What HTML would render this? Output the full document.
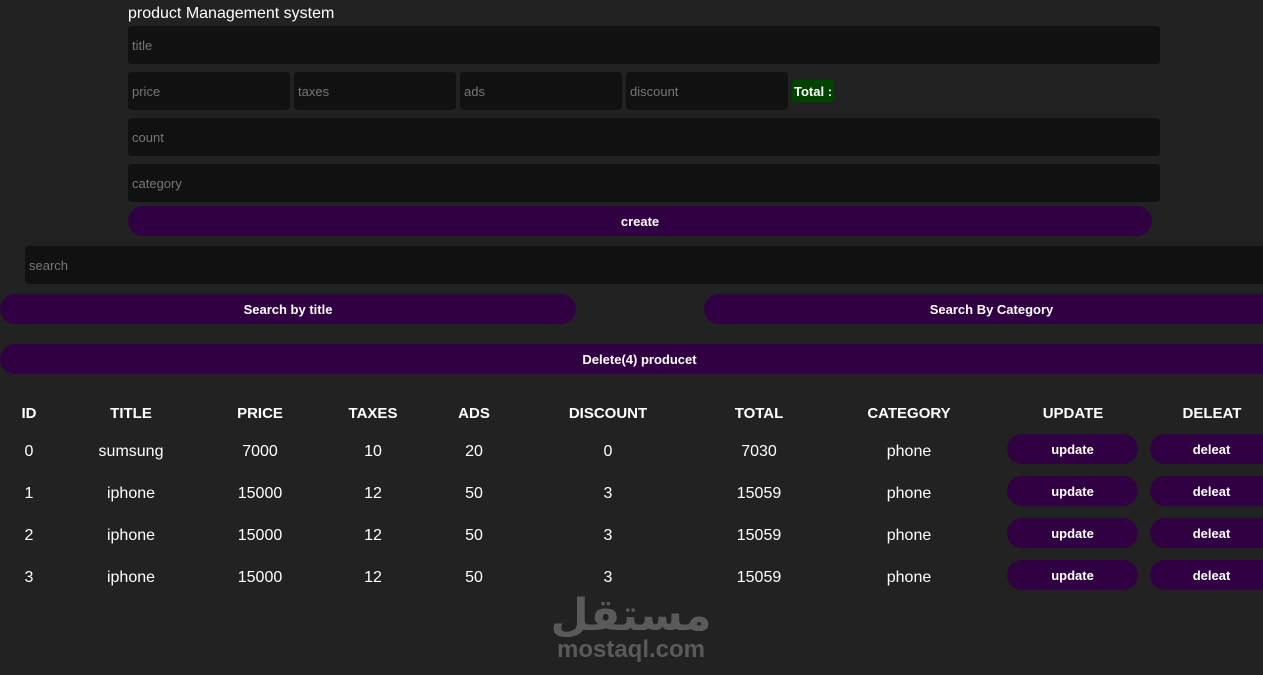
<!DOCTYPE html>
<html><head><meta charset="utf-8"><style>
body{margin:0;width:1263px;height:675px;background:#222;overflow:hidden;font-family:"Liberation Sans",sans-serif;color:#fff;position:relative}
.a{position:absolute}
.in{position:absolute;background:#111;border-radius:4px;height:38px;color:#777;font-size:13px;line-height:40px;padding-left:4px;box-sizing:border-box}
.btn{position:absolute;background:#310042;border-radius:15px;height:30px;line-height:32px;text-align:center;font-size:13px;font-weight:bold;color:#fff}
.c{position:absolute;transform:translateX(-50%);font-size:16px;white-space:nowrap;margin-top:1px}
.h{font-weight:bold;font-size:15px}
</style></head><body>
<div class="a" style="left:128px;top:5px;font-size:16px">product Management system</div>
<div class="in" style="left:128px;top:26px;width:1032px">title</div>
<div class="in" style="left:128px;top:72px;width:162px">price</div>
<div class="in" style="left:294px;top:72px;width:162px">taxes</div>
<div class="in" style="left:460px;top:72px;width:162px">ads</div>
<div class="in" style="left:626px;top:72px;width:162px">discount</div>
<div class="a" style="left:792px;top:80px;height:22px;line-height:23px;padding:0 2px;background:#004400;border-radius:3px;font-size:13px;font-weight:bold">Total :</div>
<div class="in" style="left:128px;top:118px;width:1032px">count</div>
<div class="in" style="left:128px;top:164px;width:1032px">category</div>
<div class="btn" style="left:128px;top:206px;width:1024px">create</div>
<div class="in" style="left:25px;top:246px;width:1250px">search</div>
<div class="btn" style="left:0;top:294px;width:576px">Search by title</div>
<div class="btn" style="left:704px;top:294px;width:575px">Search By Category</div>
<div class="btn" style="left:0;top:344px;width:1279px">Delete(4) producet</div>
<div class="c h" style="left:29px;top:404px">ID</div>
<div class="c h" style="left:131px;top:404px">TITLE</div>
<div class="c h" style="left:260px;top:404px">PRICE</div>
<div class="c h" style="left:373px;top:404px">TAXES</div>
<div class="c h" style="left:474px;top:404px">ADS</div>
<div class="c h" style="left:608px;top:404px">DISCOUNT</div>
<div class="c h" style="left:759px;top:404px">TOTAL</div>
<div class="c h" style="left:909px;top:404px">CATEGORY</div>
<div class="c h" style="left:1073px;top:404px">UPDATE</div>
<div class="c h" style="left:1212px;top:404px">DELEAT</div>

<div class="c" style="left:29px;top:442px">0</div><div class="c" style="left:131px;top:442px">sumsung</div><div class="c" style="left:260px;top:442px">7000</div><div class="c" style="left:373px;top:442px">10</div><div class="c" style="left:474px;top:442px">20</div><div class="c" style="left:608px;top:442px">0</div><div class="c" style="left:759px;top:442px">7030</div><div class="c" style="left:909px;top:442px">phone</div>
<div class="btn" style="left:1007px;top:434px;width:131px">update</div><div class="btn" style="left:1150px;top:434px;width:130px;text-indent:-7px">deleat</div>

<div class="c" style="left:29px;top:484px">1</div><div class="c" style="left:131px;top:484px">iphone</div><div class="c" style="left:260px;top:484px">15000</div><div class="c" style="left:373px;top:484px">12</div><div class="c" style="left:474px;top:484px">50</div><div class="c" style="left:608px;top:484px">3</div><div class="c" style="left:759px;top:484px">15059</div><div class="c" style="left:909px;top:484px">phone</div>
<div class="btn" style="left:1007px;top:476px;width:131px">update</div><div class="btn" style="left:1150px;top:476px;width:130px;text-indent:-7px">deleat</div>

<div class="c" style="left:29px;top:526px">2</div><div class="c" style="left:131px;top:526px">iphone</div><div class="c" style="left:260px;top:526px">15000</div><div class="c" style="left:373px;top:526px">12</div><div class="c" style="left:474px;top:526px">50</div><div class="c" style="left:608px;top:526px">3</div><div class="c" style="left:759px;top:526px">15059</div><div class="c" style="left:909px;top:526px">phone</div>
<div class="btn" style="left:1007px;top:518px;width:131px">update</div><div class="btn" style="left:1150px;top:518px;width:130px;text-indent:-7px">deleat</div>

<div class="c" style="left:29px;top:568px">3</div><div class="c" style="left:131px;top:568px">iphone</div><div class="c" style="left:260px;top:568px">15000</div><div class="c" style="left:373px;top:568px">12</div><div class="c" style="left:474px;top:568px">50</div><div class="c" style="left:608px;top:568px">3</div><div class="c" style="left:759px;top:568px">15059</div><div class="c" style="left:909px;top:568px">phone</div>
<div class="btn" style="left:1007px;top:560px;width:131px">update</div><div class="btn" style="left:1150px;top:560px;width:130px;text-indent:-7px">deleat</div>

<div class="c" style="left:631px;top:582px;font-family:'Noto Sans CJK SC','DejaVu Sans',sans-serif;font-size:44px;font-weight:bold;color:#5a5a5a;line-height:56px">مستقل</div>
<div class="c" style="left:631px;top:635px;font-size:24px;font-weight:bold;color:#5a5a5a">mostaql.com</div>
</body></html>
